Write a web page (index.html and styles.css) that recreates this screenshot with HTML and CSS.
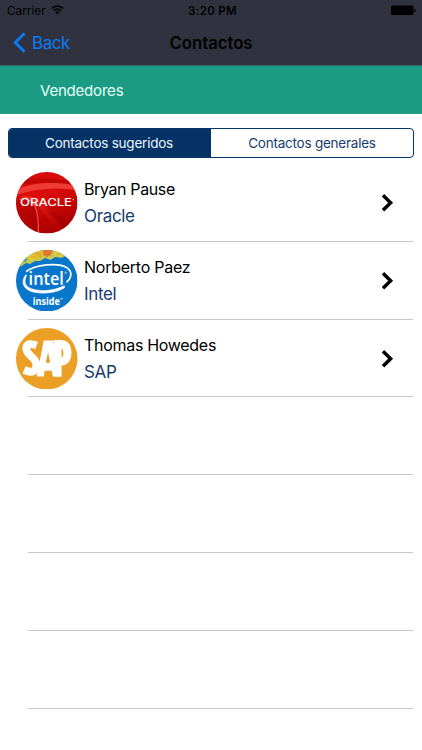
FILE: index.html
```html
<!DOCTYPE html>
<html lang="es">
<head>
<meta charset="utf-8">
<title>Contactos</title>
<link rel="stylesheet" href="styles.css">
</head>
<body>
<header class="top">
  <div class="status">
    <div class="carrier"><span>Carrier</span>
      <svg class="wifi" width="13" height="10" viewBox="0 0 13 10"><g fill="none" stroke="#000" stroke-width="1.6"><path d="M.8 3.4Q6.500-1.400 12.200 3.400"/><path d="M2.900 5.600Q6.500 2.600 10.100 5.600"/></g><path d="M4.300 7.100Q6.500 5.400 8.700 7.100L6.500 9.400Z"/></svg>
    </div>
    <span class="time">3:20 PM</span>
    <svg class="battery" width="25" height="11" viewBox="0 0 25 11"><rect x="0" y=".5" width="22.500" height="9.500" rx="1.500"/><path d="M23.200 3.800Q24.700 4 24.700 5.500T23.200 7.200Z"/></svg>
  </div>
  <nav class="nav">
    <a class="back"><svg width="13" height="21" viewBox="0 0 13 21"><path d="M11.600 1.300L2.200 10.500L11.600 19.700" fill="none" stroke="#0b7bf5" stroke-width="2.900"/></svg><span>Back</span></a>
    <h1 class="title">Contactos</h1>
  </nav>
</header>
<div class="section"><span>Vendedores</span></div>
<div class="tabs">
  <div class="tab active"><span>Contactos sugeridos</span></div>
  <div class="tab"><span>Contactos generales</span></div>
</div>
<ul class="list">
  <li class="row">
    <svg class="logo" viewBox="0 0 61 61">
      <defs>
        <clipPath id="disc"><circle cx="30.500" cy="30.500" r="30.500"/></clipPath>
        <linearGradient id="red" x1="0" y1="0" x2=".4" y2="1"><stop offset="0" stop-color="#d50b0b"/><stop offset=".45" stop-color="#dc0c0c"/><stop offset="1" stop-color="#ad0000"/></linearGradient>
        <linearGradient id="beam" x1="0" y1="0" x2="1" y2=".6"><stop offset="0" stop-color="#ff4a42" stop-opacity=".65"/><stop offset="1" stop-color="#f01818" stop-opacity=".05"/></linearGradient>
      </defs>
      <g clip-path="url(#disc)">
        <rect width="61" height="61" fill="url(#red)"/>
        <path d="M0 17Q30 6 61 14V18Q28 13 0 23Z" fill="#ff5a50" opacity=".6"/>
        <path d="M0 8Q30 4 61 10V13Q28 8 0 14Z" fill="#a90000" opacity=".5"/>
        <path d="M0 25Q13 23 20 34Q23 45 24 61H0Z" fill="#a30000" opacity=".5"/>
        <path d="M3 27Q13 24 19 34Q23 45 22 61" fill="none" stroke="#ff685e" stroke-width="1.200" opacity=".8"/>
        <path d="M4 24Q28 20 48 61H40Q26 31 4 24Z" fill="url(#beam)"/>
        <path d="M26 37Q44 42 56 53L49 61Q40 43 26 37Z" fill="#980000" opacity=".4"/>
      </g>
      <text x="4" y="34" class="oracle" textLength="51.500" lengthAdjust="spacingAndGlyphs">ORACLE</text>
      <circle cx="56.800" cy="27.500" r=".6" fill="#fff"/>
    </svg>
    <div class="info"><span class="name n1">Bryan Pause</span><span class="company">Oracle</span></div>
    <svg class="chevron" viewBox="0 0 14 20"><path d="M3 2.200L10.600 9.700L3 17.200"/></svg>
  </li>
  <li class="row">
    <svg class="logo" viewBox="0 0 61 61">
      <g clip-path="url(#disc)">
        <rect width="61" height="61" fill="#0876ca"/>
        <path d="M0 0H61V9L54 8L49 6L45 8L39 7L34 10L29 8L24 11L19 11L14 14L10 13L5 16H0Z" fill="#c8c94f"/>
        <path d="M17 1H26V6L22 9L18 7Z" fill="#f0b52f"/><path d="M27 0H37L35 4L31 7L27 5Z" fill="#e9702f"/><path d="M38 1L48 4L43 6L38 5Z" fill="#e4d33e"/><path d="M12 6L17 4L18 9L13 11Z" fill="#ebc92f"/><path d="M7 9L12 8L10 12H5Z" fill="#65a88b"/><path d="M30 3V7M20 4H24V8M34 2V6M15 7H18M40 4H46" fill="none" stroke="#b99b30" stroke-width=".8"/>
      </g>
      <path d="M10 21.500C19 14.500 42 12 50.500 17.500C56 21.500 55.500 27.500 50 32" fill="none" stroke="#fff" stroke-width="1.700"/>
      <path d="M9.800 24.500C4 32 7.500 40 19 42C30 44 42 41.500 48 37.500V35.500C38 40 28 41.500 19 39.500C9 37.500 7 32 10.500 25Z" fill="#fff" stroke="#fff" stroke-width=".7"/>
      <text x="12.500" y="34.500" class="intel" textLength="35" lengthAdjust="spacingAndGlyphs">intel</text>
      <circle cx="49.300" cy="22.500" r=".8" fill="none" stroke="#fff" stroke-width=".5"/>
      <text x="16.500" y="54.500" class="inside" textLength="27" lengthAdjust="spacingAndGlyphs">inside</text>
      <path d="M44 48.400H46.500" stroke="#fff" stroke-width=".8"/>
    </svg>
    <div class="info"><span class="name n2">Norberto Paez</span><span class="company">Intel</span></div>
    <svg class="chevron" viewBox="0 0 14 20"><path d="M3 2.200L10.600 9.700L3 17.200"/></svg>
  </li>
  <li class="row">
    <svg class="logo" viewBox="0 0 61 61">
      <circle cx="30.500" cy="30.500" r="30.500" fill="#eb9f24"/>
      <g fill="none" stroke="#fff">
        <path d="M20.500 17.200Q10.200 13.500 10.200 20.500C10.500 27.500 20.200 29 20.200 36.500Q20.200 47 8 41.500" stroke-width="7.800"/>
        <path d="M41.200 48V16H43.500Q51 16 51 24.800T43.500 33.500H42" stroke-width="8"/>
      </g>
      <path fill="#fff" fill-rule="evenodd" d="M20.500 48L27.500 12.300H36.500L45.200 48H36.500L35.300 42.500H28.500L27.500 48ZM29.500 34.500H34L31.800 24Z"/>
    </svg>
    <div class="info"><span class="name n3">Thomas Howedes</span><span class="company">SAP</span></div>
    <svg class="chevron" viewBox="0 0 14 20"><path d="M3 2.200L10.600 9.700L3 17.200"/></svg>
  </li>
  <li class="row"></li><li class="row"></li><li class="row"></li><li class="row"></li>
</ul>
</body>
</html>
```
FILE: styles.css
```css
* { box-sizing: border-box; }
body { margin: 0; height: 750px; overflow: hidden; background: #fff; font-family: Inter, "Liberation Sans", sans-serif; color: #000; }
.top { height: 66px; background: #30333f; border-bottom: 1px solid #356462; }
.status { height: 21px; display: grid; grid-template-columns: 1fr auto 1fr; align-items: center; padding: 0 6px 0 7px; font-size: 11.8px; }
.carrier { display: flex; align-items: center; gap: 5px; }
.wifi { margin-top: -1px; }
.time { font-weight: 600; font-size: 11.5px; letter-spacing: .3px; padding: 1px 0 0 2px; }
.battery { justify-self: end; }
.nav { height: 43px; display: grid; grid-template-columns: 1fr auto 1fr; align-items: center; padding: 0 13px; }
.back { display: flex; align-items: center; gap: 6px; color: #0b7bf5; font-size: 17px; letter-spacing: -.45px; }
.title { margin: 0; font-size: 16.8px; font-weight: 600; letter-spacing: -.05px; }
.section { height: 48px; display: flex; align-items: center; padding-left: 40px; background: #1b9b83; color: #e6fff8; font-size: 15px; letter-spacing: -.2px; }
.tabs { height: 30px; margin: 14px 8px 0; display: grid; grid-template-columns: 1fr 1fr; border: 1px solid #073568; border-radius: 4px; overflow: hidden; }
.tab { display: flex; align-items: center; justify-content: center; color: #173d70; font-size: 13.5px; letter-spacing: -.23px; }
.active { background: #053366; color: #edf5ff; padding-right: 2px; }
.list { margin: 6px 0 0; padding: 0; list-style: none; }
.row { height: 77.830px; display: flex; align-items: flex-start; padding: 8px 28px 0 16px; background: linear-gradient(#c8c8cb, #c8c8cb) 28px 100% / 385px 1px no-repeat; }
.logo { width: 61.500px; height: 61.500px; flex: none; }
.oracle { font-family: Inter, sans-serif; font-size: 10.500px; font-weight: 500; fill: #fff; }
.intel { font-family: "Open Sans", sans-serif; font-size: 18.500px; font-weight: 600; fill: #fff; }
.inside { font-family: "Open Sans", sans-serif; font-size: 10.500px; font-weight: 700; fill: #fff; }
.info { flex: 1; display: flex; flex-direction: column; padding: 5px 0 0 6.500px; font-size: 16px; line-height: 24px; white-space: nowrap; }
.name { letter-spacing: -.38px; }
.n2 { letter-spacing: -.25px; }
.n3 { letter-spacing: -.3px; }
.company { font-size: 17px; line-height: 30px; color: #153b70; letter-spacing: -.35px; }
.chevron { width: 14px; height: 20px; margin-top: 21px; }
.chevron path { fill: none; stroke: #000; stroke-width: 3.500; }
```
